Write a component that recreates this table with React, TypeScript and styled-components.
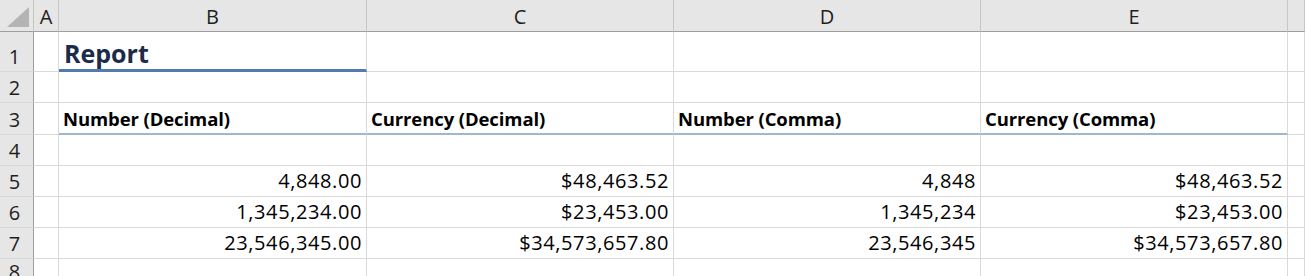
import * as React from 'react';
import styled, { createGlobalStyle, css } from 'styled-components';

const GlobalStyle = createGlobalStyle`
  body {
    margin: 0;
    background: #ffffff;
    font-family: 'Open Sans', 'Liberation Sans', sans-serif;
  }
`;

const GRID = '#d9d9d9';
const HEADER_LINE = '#9e9e9e';

const Sheet = styled.div`
  display: grid;
  grid-template-columns: 34px 25px 308px 307px 307px 307px 1fr;
  grid-template-rows: 32px 40px 31px 32px 31px 31px 31px 31px 1fr;
  width: 1305px;
  height: 276px;
  overflow: hidden;
  background: #ffffff;
`;

const Corner = styled.div`
  box-sizing: border-box;
  display: flex;
  align-items: flex-end;
  justify-content: flex-end;
  padding: 0 4px 4px 0;
  background: #e6e6e6;
  border-right: 1px solid #c6c6c6;
  border-bottom: 1px solid ${HEADER_LINE};
`;

const ColumnHeader = styled.div`
  box-sizing: border-box;
  display: flex;
  align-items: center;
  justify-content: center;
  background: #e6e6e6;
  border-right: 1px solid #c6c6c6;
  border-bottom: 1px solid ${HEADER_LINE};
  font-size: 20px;
  color: #1e1e1e;
  padding-top: 1px;
`;

const RowHeader = styled.div`
  box-sizing: border-box;
  display: flex;
  align-items: flex-end;
  justify-content: center;
  background: #e6e6e6;
  border-right: 1px solid ${HEADER_LINE};
  border-bottom: 1px solid ${GRID};
  font-size: 20px;
  line-height: 1.3;
  color: #1e1e1e;
  padding-bottom: 1px;
  padding-right: 4px;
`;

type Rule = 'none' | 'title' | 'heading';

const Cell = styled.div<{ $align?: 'left' | 'right'; $rule?: Rule }>`
  box-sizing: border-box;
  display: flex;
  align-items: flex-end;
  justify-content: ${(p) => (p.$align === 'right' ? 'flex-end' : 'flex-start')};
  padding: 0 4px 2px 4px;
  border-right: 1px solid ${GRID};
  border-bottom: 1px solid ${GRID};
  font-size: 20px;
  line-height: 1.3;
  letter-spacing: 0.6px;
  color: #000000;
  white-space: nowrap;
  ${(p) =>
    p.$rule === 'title' &&
    css`
      border-bottom: 3px solid #5479ad;
    `}
  ${(p) =>
    p.$rule === 'heading' &&
    css`
      border-bottom: 2px solid #a3b6d0;
    `}
`;

const Title = styled.span`
  font-size: 25px;
  font-weight: 700;
  letter-spacing: 0;
  color: #1c2b49;
  line-height: 1;
  padding: 0 0 1px 1px;
`;

const Heading = styled.span`
  font-size: 18.5px;
  font-weight: 700;
  letter-spacing: -0.1px;
`;

const columns = ['A', 'B', 'C', 'D', 'E', ''];

const headings = ['Number (Decimal)', 'Currency (Decimal)', 'Number (Comma)', 'Currency (Comma)'];

const values: string[][] = [
  ['4,848.00', '$48,463.52', '4,848', '$48,463.52'],
  ['1,345,234.00', '$23,453.00', '1,345,234', '$23,453.00'],
  ['23,546,345.00', '$34,573,657.80', '23,546,345', '$34,573,657.80'],
];

const CornerMark = () => (
  <svg width="22" height="20" viewBox="0 0 22 20">
    <polygon points="22,0 22,20 0,20" fill="#b4b4b4" />
  </svg>
);

const BlankRow: React.FC<{ n: number }> = ({ n }) => (
  <>
    <RowHeader>{n}</RowHeader>
    {columns.map((c, i) => (
      <Cell key={i} />
    ))}
  </>
);

const App: React.FC = () => (
  <>
    <GlobalStyle />
    <Sheet>
      <Corner>
        <CornerMark />
      </Corner>
      {columns.map((c, i) => (
        <ColumnHeader key={i}>{c}</ColumnHeader>
      ))}

      {/* row 1: title over column B */}
      <RowHeader>1</RowHeader>
      <Cell />
      <Cell $rule="title">
        <Title>Report</Title>
      </Cell>
      <Cell />
      <Cell />
      <Cell />
      <Cell />

      <BlankRow n={2} />

      {/* row 3: column headings */}
      <RowHeader>3</RowHeader>
      <Cell />
      {headings.map((h) => (
        <Cell key={h} $rule="heading">
          <Heading>{h}</Heading>
        </Cell>
      ))}
      <Cell />

      <BlankRow n={4} />

      {values.map((line, r) => (
        <React.Fragment key={r}>
          <RowHeader>{r + 5}</RowHeader>
          <Cell />
          {line.map((v, i) => (
            <Cell key={i} $align="right">
              {v}
            </Cell>
          ))}
          <Cell />
        </React.Fragment>
      ))}

      <BlankRow n={8} />
    </Sheet>
  </>
);

export default App;
